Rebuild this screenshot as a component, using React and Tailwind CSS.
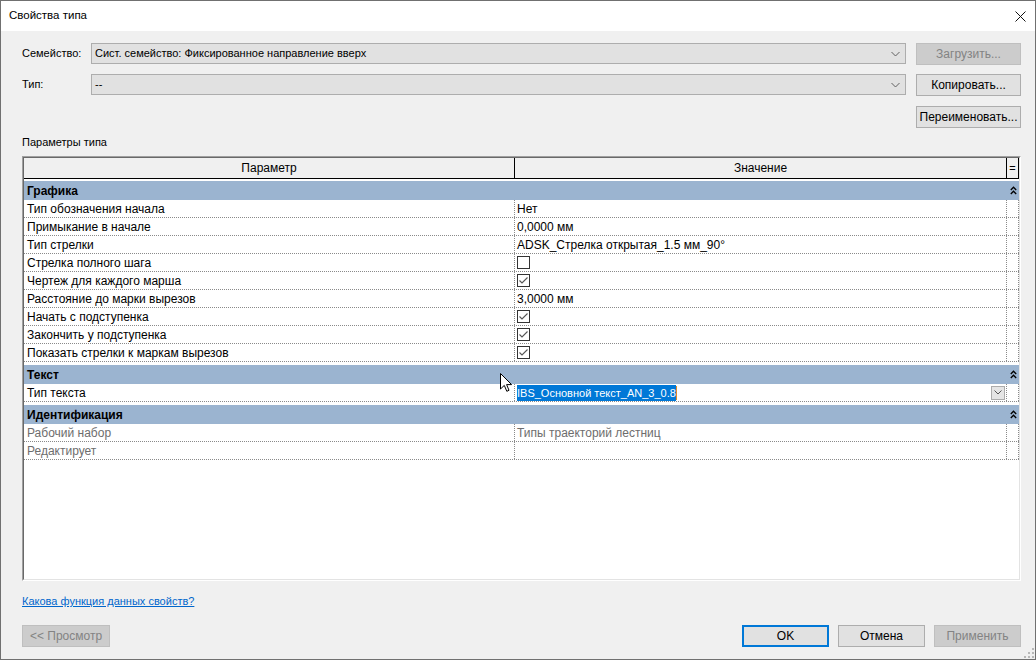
import React from 'react';

const ROWS = [
  { group: 'Графика' },
  { p: 'Тип обозначения начала', v: 'Нет' },
  { p: 'Примыкание в начале', v: '0,0000 мм' },
  { p: 'Тип стрелки', v: 'ADSK_Стрелка открытая_1.5 мм_90°' },
  { p: 'Стрелка полного шага', check: false },
  { p: 'Чертеж для каждого марша', check: true },
  { p: 'Расстояние до марки вырезов', v: '3,0000 мм' },
  { p: 'Начать с подступенка', check: true },
  { p: 'Закончить у подступенка', check: true },
  { p: 'Показать стрелки к маркам вырезов', check: true },
  { group: 'Текст' },
  { p: 'Тип текста', selected: 'IBS_Основной текст_AN_3_0.8' },
  { group: 'Идентификация' },
  { p: 'Рабочий набор', v: 'Типы траекторий лестниц', muted: true },
  { p: 'Редактирует', v: '', muted: true },
];

const Chevron = ({ color = '#444' }) => (
  <svg width="9" height="6" viewBox="0 0 9 6">
    <path d="M0.5 1 L4.5 5 L8.5 1" fill="none" stroke={color} strokeWidth="1" />
  </svg>
);

const Collapse = () => (
  <svg width="7" height="9" viewBox="0 0 7 9">
    <path d="M0.8 4 L3.5 1.2 L6.2 4" fill="none" stroke="#000" strokeWidth="1.3" />
    <path d="M0.8 8 L3.5 5.2 L6.2 8" fill="none" stroke="#000" strokeWidth="1.3" />
  </svg>
);

const CheckBox = ({ checked }) => (
  <div className="w-[13px] h-[13px] border border-[#333333] bg-white flex items-center justify-center">
    {checked && (
      <svg width="11" height="11" viewBox="0 0 11 11">
        <path d="M1.5 5.5 L4 8 L9.5 2.5" fill="none" stroke="#555555" strokeWidth="1.1" />
      </svg>
    )}
  </div>
);

const Button = ({ children, disabled, primary, className = '' }) => (
  <div
    className={
      'h-[22px] flex items-center justify-center ' +
      (disabled
        ? 'bg-[#cccccc] border border-[#bfbfbf] text-[#838383] '
        : primary
        ? 'bg-[#e1e1e1] border-2 border-[#0078d7] text-black '
        : 'bg-[#e1e1e1] border border-[#adadad] text-black ') +
      className
    }
  >
    {children}
  </div>
);

const Combo = ({ text }) => (
  <div className="w-[815px] h-[21px] bg-[#e1e1e1] border border-[#adadad] flex items-center pl-[3px] pr-[5px]">
    <span className="flex-1 text-[11px]">{text}</span>
    <Chevron color="#606060" />
  </div>
);

const Cursor = () => (
  <svg width="13" height="20" viewBox="0 0 13 20" className="absolute left-[499px] top-[372px]">
    <path d="M0.5 0.5 L0.5 16 L4.3 12.4 L6.8 18.3 L9 17.3 L6.6 11.6 L11.6 11.6 Z" fill="#fff" stroke="#000" strokeWidth="1" />
  </svg>
);

const GroupRow = ({ label, first }) => (
  <div className={'h-[19px] bg-[#9bb4d0] flex items-center ' + (first ? 'mt-[2px]' : 'mt-[3px]')}>
    <div className="w-[983px] pl-[3px] font-bold text-black">{label}</div>
    <div className="w-[12px] flex justify-center">
      <Collapse />
    </div>
  </div>
);

const DataRow = ({ row }) => (
  <div className="h-[18px] flex border-b border-dotted border-[#8a8a8a]">
    <div
      className={
        'w-[491px] pl-[3px] flex items-center border-r border-dotted border-[#8a8a8a] ' +
        (row.muted ? 'text-[#6d6d6d]' : 'text-black')
      }
    >
      {row.p}
    </div>
    <div
      className={
        'w-[492px] pl-[2px] flex items-center border-r border-dotted border-[#8a8a8a] ' +
        (row.muted ? 'text-[#6d6d6d]' : 'text-black')
      }
    >
      {row.check !== undefined && <CheckBox checked={row.check} />}
      {row.v}
      {row.selected && (
        <>
          <span className="bg-[#0078d7] text-white text-[11px] leading-[16px]">{row.selected}</span>
          <span className="w-px h-[14px] bg-[#e08a2c]" />
          <div className="ml-auto mr-[1px] w-[14px] h-[14px] bg-[#e5e5e5] border border-[#acacac] flex items-center justify-center">
            <svg width="8" height="5" viewBox="0 0 8 5">
              <path d="M0.5 0.5 L4 4 L7.5 0.5" fill="none" stroke="#555" strokeWidth="1" />
            </svg>
          </div>
        </>
      )}
    </div>
    <div className="w-[12px] border-r border-dotted border-[#8a8a8a]" />
  </div>
);

export default function App() {
  return (
    <div className="relative w-[1036px] h-[660px] border border-[#707070] bg-[#f0f0f0] flex flex-col overflow-hidden font-['Segoe_UI','Liberation_Sans',Arial,sans-serif] text-[12px] text-black">
      {/* title bar */}
      <div className="h-[30px] bg-white flex items-center pl-[8px] pr-[9px] shrink-0">
        <span className="flex-1 text-[11.5px]">Свойства типа</span>
        <svg width="11" height="11" viewBox="0 0 11 11">
          <path d="M0.5 0.5 L10.5 10.5 M10.5 0.5 L0.5 10.5" stroke="#111" strokeWidth="1" />
        </svg>
      </div>

      <div className="flex-1 flex flex-col pl-[21px] pr-[14px] pt-[12px]">
        <div className="flex items-center h-[21px]">
          <div className="w-[69px] text-[11px]">Семейство:</div>
          <Combo text="Сист. семейство: Фиксированное направление вверх" />
          <Button disabled className="ml-[10px] w-[105px] h-[21px]">Загрузить...</Button>
        </div>
        <div className="flex items-center h-[21px] mt-[10px]">
          <div className="w-[69px] text-[11px]">Тип:</div>
          <Combo text="--" />
          <Button className="ml-[10px] w-[105px]">Копировать...</Button>
        </div>
        <div className="flex justify-end mt-[11px]">
          <Button className="w-[105px]">Переименовать...</Button>
        </div>

        <div className="mt-[7px] h-[15px] leading-[15px] text-[11px]">Параметры типа</div>

        {/* property grid */}
        <div className="mt-[6px] h-[425px] border border-t-[#a0a0a0] border-l-[#a0a0a0] border-r-white border-b-white">
          <div className="h-full border border-t-[#696969] border-l-[#696969] border-r-[#e3e3e3] border-b-[#e3e3e3] bg-white flex flex-col">
            <div className="h-[21px] flex bg-[#f0f0f0] border-b border-black shrink-0">
              <div className="w-[491px] border-r border-black flex items-center justify-center">Параметр</div>
              <div className="w-[492px] border-r border-black flex items-center justify-center">Значение</div>
              <div className="w-[12px] border-r border-black flex items-center justify-center text-[11px] leading-none">=</div>
            </div>
            {ROWS.map((r, i) =>
              r.group ? <GroupRow key={i} label={r.group} first={i === 0} /> : <DataRow key={i} row={r} />
            )}
          </div>
        </div>

        <div className="mt-[13px] h-[14px] leading-[14px] text-[11px]">
          <span className="text-[#0066cc] underline">Какова функция данных свойств?</span>
        </div>

        <div className="mt-[17px] flex">
          <Button disabled className="w-[88px]">&lt;&lt; Просмотр</Button>
          <div className="ml-auto flex gap-[9px]">
            <Button primary className="w-[87px]">OK</Button>
            <Button className="w-[87px]">Отмена</Button>
            <Button disabled className="w-[87px]">Применить</Button>
          </div>
        </div>
      </div>

      {/* resize grip */}
      <svg width="10" height="10" viewBox="0 0 10 10" className="absolute right-[1px] bottom-[1px]">
        <rect x="8" y="0" width="2" height="2" fill="#b8b8b8" />
        <rect x="4" y="4" width="2" height="2" fill="#b8b8b8" />
        <rect x="8" y="4" width="2" height="2" fill="#b8b8b8" />
        <rect x="0" y="8" width="2" height="2" fill="#b8b8b8" />
        <rect x="4" y="8" width="2" height="2" fill="#b8b8b8" />
        <rect x="8" y="8" width="2" height="2" fill="#b8b8b8" />
      </svg>

      <Cursor />
    </div>
  );
}
